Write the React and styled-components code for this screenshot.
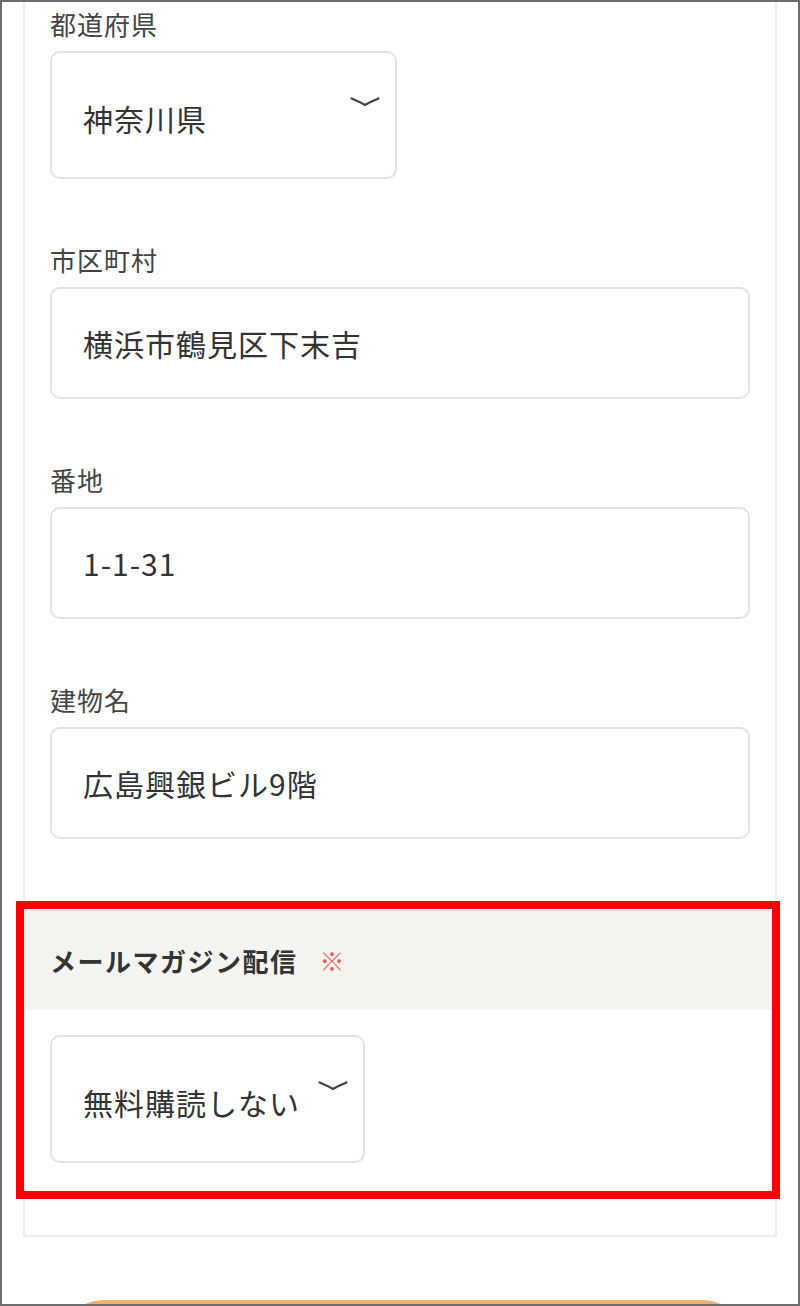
import styled, { createGlobalStyle } from 'styled-components'


const fields = [
	{ label: '市区町村', value: '横浜市鶴見区下末吉' },
	{ label: '番地', value: '1-1-31' },
	{ label: '建物名', value: '広島興銀ビル9階' },
]


const Chevron = () => (
	<ChevronSvg viewBox="0 0 30 10" width="30" height="10">
		<path d="M1.5 1.5 Q 9 4.5 15 8 Q 21 4.5 28.5 1.5" />
	</ChevronSvg>
)


const App = () => {
	return (
		<>
			<GlobalStyle />
			<Frame>
				<Card>
					<Fields>
						<Field>
							<Label>都道府県</Label>
							<SelectBox width={347}>
								<SelectText>神奈川県</SelectText>
								<Chevron />
							</SelectBox>
						</Field>

						{fields.map(({ label, value }) => (
							<Field key={label}>
								<Label>{label}</Label>
								<InputBox>{value}</InputBox>
							</Field>
						))}
					</Fields>

					<MailSection>
						<Band>
							<BandTitle>メールマガジン配信</BandTitle>
							<Required>※</Required>
						</Band>

						<MailBody>
							<SelectBox width={315}>
								<SelectText>無料購読しない</SelectText>
								<Chevron />
							</SelectBox>
						</MailBody>

						<Highlight />
					</MailSection>
				</Card>

				<SubmitButton />
			</Frame>
		</>
	)
}


export default App


const GlobalStyle = createGlobalStyle`
	* {
		box-sizing: border-box;
	}

	body {
		margin: 0;
		background: #ffffff;
		font-family: "Noto Sans CJK JP", "Noto Sans", sans-serif;
		color: #333333;
	}
`

const Frame = styled.div`
	width: 800px;
	height: 1306px;
	border: 2px solid #6e6e6e;
	overflow: hidden;
	background: #ffffff;
`

const Card = styled.div`
	width: 754px;
	margin-left: 21px;
	padding-top: 2px;

	border: 2px solid #ececec;
	border-top: none;
`

const Fields = styled.div`
	padding: 0 25px;

	display: flex;
	flex-direction: column;
	gap: 61px;
`

const Field = styled.div`
	display: flex;
	flex-direction: column;
	align-items: flex-start;
`

const Label = styled.span`
	margin-bottom: 8px;

	font-size: 26px;
	line-height: 39px;
	letter-spacing: 1px;
	color: #444444;
`

const InputBox = styled.div`
	width: 700px;
	height: 112px;
	padding-left: 31px;

	display: flex;
	align-items: center;

	border: 2px solid #e2e2e2;
	border-radius: 10px;

	font-size: 30px;
	letter-spacing: 1px;
	color: #333333;
`

const SelectBox = styled.div`
	width: ${props => props.width}px;
	height: 128px;
	padding: 0 15px 0 31px;

	display: flex;
	justify-content: space-between;
	align-items: center;

	border: 2px solid #e2e2e2;
	border-radius: 10px;
`

const SelectText = styled.span`
	padding-top: 6px;

	font-size: 30px;
	letter-spacing: 1px;
	color: #333333;
`

const ChevronSvg = styled.svg`
	align-self: flex-start;
	margin-top: 44px;

	fill: none;
	stroke: #444444;
	stroke-width: 2.2;
	stroke-linecap: round;
`

const MailSection = styled.div`
	position: relative;
	margin-top: 64px;
`

const Band = styled.div`
	padding: 38px 25px 30px;

	display: flex;
	align-items: center;

	background: #f5f4f0;
`

const BandTitle = styled.span`
	font-size: 26px;
	line-height: 39px;
	font-weight: bold;
	letter-spacing: 1.5px;
	color: #333333;
`

const Required = styled.span`
	margin-left: 22px;

	font-size: 25px;
	line-height: 39px;
	color: #ef5a5a;
`

const MailBody = styled.div`
	padding: 25px 25px 72px;
`

const Highlight = styled.div`
	position: absolute;
	top: -2px;
	left: -9px;
	width: 764px;
	height: 298px;

	border: 8px solid #ff0000;
	pointer-events: none;
`

const SubmitButton = styled.div`
	width: 680px;
	height: 80px;
	margin: 63px 0 0 61px;

	border-radius: 40px;
	background: linear-gradient(#f6b16a, #f09a46);
`
